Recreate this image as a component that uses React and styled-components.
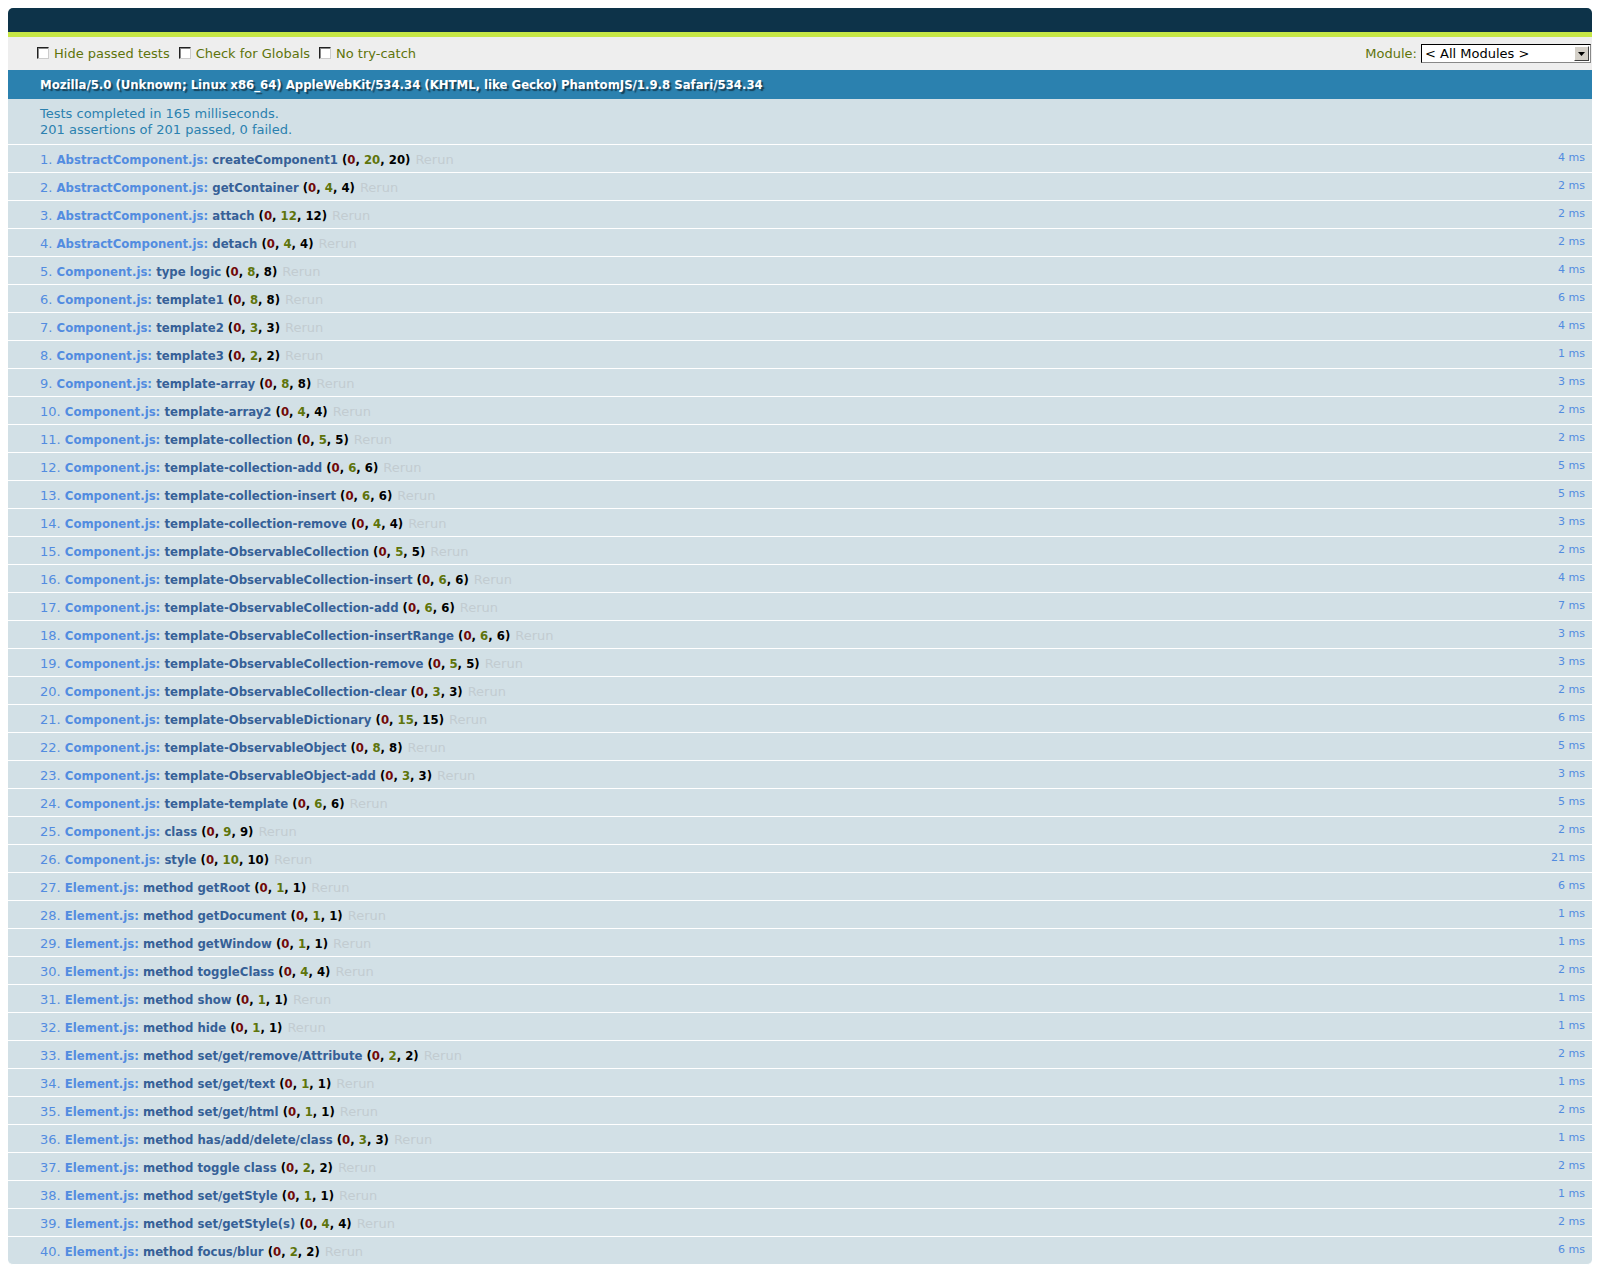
import React from 'react';
import styled, { createGlobalStyle } from 'styled-components';

const GlobalStyle = createGlobalStyle`
  body {
    margin: 8px;
    background: #fff;
    font-family: "DejaVu Sans", "Liberation Sans", sans-serif;
  }
`;

const boldFont = `
  font-family: "DejaVu Sans Condensed", "DejaVu Sans", sans-serif;
  font-stretch: condensed;
  font-weight: bold;
`;

const tests = [
  ['AbstractComponent.js:', 'createComponent1', 20, 4],
  ['AbstractComponent.js:', 'getContainer', 4, 2],
  ['AbstractComponent.js:', 'attach', 12, 2],
  ['AbstractComponent.js:', 'detach', 4, 2],
  ['Component.js:', 'type logic', 8, 4],
  ['Component.js:', 'template1', 8, 6],
  ['Component.js:', 'template2', 3, 4],
  ['Component.js:', 'template3', 2, 1],
  ['Component.js:', 'template-array', 8, 3],
  ['Component.js:', 'template-array2', 4, 2],
  ['Component.js:', 'template-collection', 5, 2],
  ['Component.js:', 'template-collection-add', 6, 5],
  ['Component.js:', 'template-collection-insert', 6, 5],
  ['Component.js:', 'template-collection-remove', 4, 3],
  ['Component.js:', 'template-ObservableCollection', 5, 2],
  ['Component.js:', 'template-ObservableCollection-insert', 6, 4],
  ['Component.js:', 'template-ObservableCollection-add', 6, 7],
  ['Component.js:', 'template-ObservableCollection-insertRange', 6, 3],
  ['Component.js:', 'template-ObservableCollection-remove', 5, 3],
  ['Component.js:', 'template-ObservableCollection-clear', 3, 2],
  ['Component.js:', 'template-ObservableDictionary', 15, 6],
  ['Component.js:', 'template-ObservableObject', 8, 5],
  ['Component.js:', 'template-ObservableObject-add', 3, 3],
  ['Component.js:', 'template-template', 6, 5],
  ['Component.js:', 'class', 9, 2],
  ['Component.js:', 'style', 10, 21],
  ['Element.js:', 'method getRoot', 1, 6],
  ['Element.js:', 'method getDocument', 1, 1],
  ['Element.js:', 'method getWindow', 1, 1],
  ['Element.js:', 'method toggleClass', 4, 2],
  ['Element.js:', 'method show', 1, 1],
  ['Element.js:', 'method hide', 1, 1],
  ['Element.js:', 'method set/get/remove/Attribute', 2, 2],
  ['Element.js:', 'method set/get/text', 1, 1],
  ['Element.js:', 'method set/get/html', 1, 2],
  ['Element.js:', 'method has/add/delete/class', 3, 1],
  ['Element.js:', 'method toggle class', 2, 2],
  ['Element.js:', 'method set/getStyle', 1, 1],
  ['Element.js:', 'method set/getStyle(s)', 4, 2],
  ['Element.js:', 'method focus/blur', 2, 6],
];

const Runner = styled.div`
  width: 1584px;
`;

const Header = styled.h1`
  margin: 0;
  height: 24px;
  background-color: #0d3349;
  border-radius: 5px 5px 0 0;
`;

const Banner = styled.div`
  height: 5px;
  background-color: #c6e746;
`;

const Toolbar = styled.div`
  display: flex;
  align-items: center;
  justify-content: space-between;
  height: 33px;
  padding: 0 1px 0 29px;
  background-color: #eee;
  color: #5e740b;
  font-size: 13px;
`;

const Options = styled.div`
  display: flex;
  align-items: center;
  gap: 9px;
  margin-top: -1px;
`;

const Option = styled.label`
  display: flex;
  align-items: center;
  gap: 5px;
`;

const Box = styled.span`
  display: inline-block;
  width: 10px;
  height: 10px;
  background: #fff;
  border: 1px solid;
  border-color: #222 #ccc #ccc #222;
  box-shadow: inset 1px 1px 0 #888;
`;

const ModuleFilter = styled.div`
  display: flex;
  align-items: center;
  gap: 4px;
`;

const Select = styled.div`
  display: flex;
  align-items: stretch;
  justify-content: space-between;
  width: 165px;
  height: 17px;
  border: 1px solid;
  border-color: #000 #888 #888 #000;
  background: #fff;
  color: #000;
  font-size: 13px;
  line-height: 17px;
  padding-left: 3px;
`;

const SelectButton = styled.span`
  display: flex;
  align-items: center;
  justify-content: center;
  width: 15px;
  margin: 1px;
  background: #d4d0c8;
  border: 1px solid;
  border-color: #fff #404040 #404040 #fff;
  box-sizing: border-box;
`;

const UserAgent = styled.h2`
  margin: 0;
  height: 29px;
  display: flex;
  align-items: center;
  padding-left: 32px;
  background-color: #2b81af;
  color: #fff;
  font-size: 13px;
  ${boldFont}
  text-shadow: rgba(0, 0, 0, 0.5) 2px 2px 1px;
`;

const Result = styled.p`
  margin: 0;
  padding: 7px 6px 6px 32px;
  height: 32px;
  line-height: 16px;
  background-color: #d2e0e6;
  color: #2b81af;
  font-size: 13px;
  border-bottom: 1px solid #fff;
`;

const List = styled.ol`
  margin: 0;
  padding: 0;
  list-style: none;
`;

const Row = styled.li`
  display: flex;
  align-items: center;
  box-sizing: border-box;
  height: 28px;
  padding: 2px 7px 0 32px;
  background-color: #d2e0e6;
  color: #528ce0;
  font-size: 13px;
  border-bottom: 1px solid #fff;
  &:last-child {
    border-radius: 0 0 5px 5px;
  }
`;

const Num = styled.span`
  white-space: pre;
`;

const Name = styled.strong`
  ${boldFont}
  color: ${({ $module }) => ($module ? '#528ce0' : '#366097')};
  white-space: pre;
`;

const Counts = styled.b`
  ${boldFont}
  color: #000;
  white-space: pre;
`;

const Count = styled.b`
  color: ${({ $kind }) => ($kind === 'failed' ? '#710909' : '#5e740b')};
`;

const Rerun = styled.a`
  padding-left: 5px;
  color: #c2ccd1;
  text-decoration: none;
`;

const Runtime = styled.span`
  margin-left: auto;
  font-size: 11px;
  margin-top: -4px;
`;

const App = () => {
  return (
    <>
      <GlobalStyle />
      <Runner>
        <Header />
        <Banner />
        <Toolbar>
          <Options>
            <Option><Box />Hide passed tests</Option>
            <Option><Box />Check for Globals</Option>
            <Option><Box />No try-catch</Option>
          </Options>
          <ModuleFilter>
            <span>Module:</span>
            <Select>
              <span>&lt; All Modules &gt;</span>
              <SelectButton>
                <svg width="7" height="4" viewBox="0 0 7 4">
                  <path d="M0 0h7L3.5 4z" fill="#000" />
                </svg>
              </SelectButton>
            </Select>
          </ModuleFilter>
        </Toolbar>
        <UserAgent>
          Mozilla/5.0 (Unknown; Linux x86_64) AppleWebKit/534.34 (KHTML, like Gecko) PhantomJS/1.9.8 Safari/534.34
        </UserAgent>
        <Result>
          Tests completed in 165 milliseconds.
          <br />
          201 assertions of 201 passed, 0 failed.
        </Result>
        <List>
          {tests.map(([mod, name, n, ms], i) => (
            <Row key={i}>
              <Num>{i + 1}. </Num>
              <Name $module>{mod} </Name>
              <Name>{name} </Name>
              <Counts>
                (<Count $kind="failed">0</Count>, <Count $kind="passed">{n}</Count>, {n})
              </Counts>
              <Rerun href="#">Rerun</Rerun>
              <Runtime>{ms} ms</Runtime>
            </Row>
          ))}
        </List>
      </Runner>
    </>
  );
};

export default App;
